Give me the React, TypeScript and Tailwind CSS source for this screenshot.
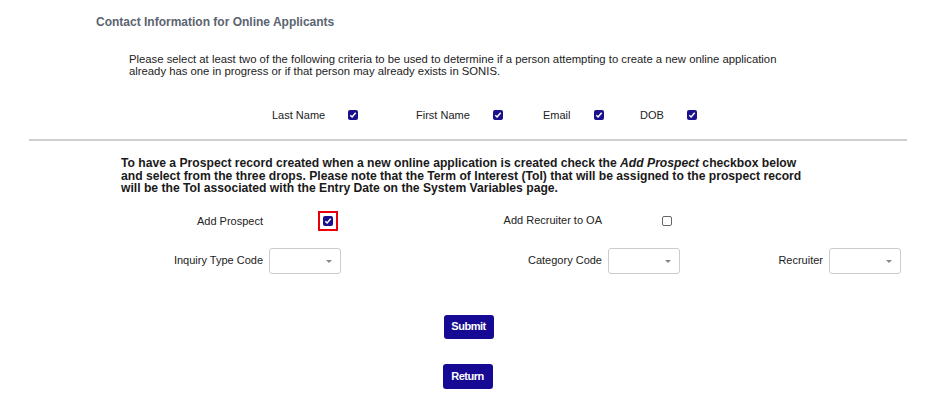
import React from "react";

const font = { fontFamily: '"Liberation Sans", Arial, sans-serif' };

function Check({ checked = true }: { checked?: boolean }) {
  if (!checked)
    return <span className="inline-block w-[10px] h-[10px] border border-[#666] rounded-[2px] bg-white" />;
  return (
    <span className="inline-flex items-center justify-center w-[10px] h-[10px] bg-[#1a0f8c] rounded-[2px]">
      <svg width="8" height="8" viewBox="0 0 8 8">
        <path d="M1.3 4.2 L3.1 6 L6.7 1.8" stroke="white" strokeWidth="1.5" fill="none" />
      </svg>
    </span>
  );
}

function Select() {
  return (
    <div className="relative w-[72px] h-[26px] border border-[#ccc] rounded-[3px] bg-white">
      <span className="absolute right-[8px] top-[11px] w-0 h-0 border-l-[3px] border-r-[3px] border-t-[3px] border-l-transparent border-r-transparent border-t-[#888]" />
    </div>
  );
}

export default function App() {
  return (
    <div className="w-[936px] h-[402px] bg-white text-[#222] text-[11px]" style={font}>
      <div className="pt-[16px] pl-[96px] text-[12px] font-bold text-[#5b6470] leading-[13px]">
        Contact Information for Online Applicants
      </div>
      <div className="mt-[24px] ml-[129px] leading-[12px] w-[665px] text-[11.3px]">
        Please select at least two of the following criteria to be used to determine if a person attempting to create a new online application already has one in progress or if that person may already exists in SONIS.
      </div>
      <div className="mt-[31px] flex items-center h-[14px] pl-[272px]">
        <span className="w-[76px]">Last Name</span>
        <Check />
        <span className="ml-[58px] w-[77px]">First Name</span>
        <Check />
        <span className="ml-[40px] w-[51px]">Email</span>
        <Check />
        <span className="ml-[36px] w-[47px]">DOB</span>
        <Check />
      </div>
      <div className="mt-[17px] mx-[29px] h-[2px] bg-[#d0d0d0]" />
      <div className="mt-[16px] ml-[121px] w-[695px] font-bold leading-[12.5px] text-[12.15px] text-[#1a1a1a]">
        To have a Prospect record created when a new online application is created check the <i>Add Prospect</i> checkbox below and select from the three drops. Please note that the Term of Interest (ToI) that will be assigned to the prospect record will be the ToI associated with the Entry Date on the System Variables page.
      </div>
      <div className="mt-[16px] grid grid-cols-[263px_177px_162px_118px_103px_113px] items-center">
        <div className="text-right h-[20px] leading-[20px]">Add Prospect</div>
        <div className="pl-[55px] flex">
          <span className="inline-flex items-center justify-center w-[20px] h-[20px] border-2 border-[#e8000b]">
            <Check />
          </span>
        </div>
        <div className="text-right">Add Recruiter to OA</div>
        <div className="pl-[60px] flex">
          <Check checked={false} />
        </div>
        <div />
        <div />
        <div className="text-right mt-[17px]">Inquiry Type Code</div>
        <div className="pl-[6px] mt-[17px]">
          <Select />
        </div>
        <div className="text-right mt-[17px]">Category Code</div>
        <div className="pl-[6px] mt-[17px]">
          <Select />
        </div>
        <div className="text-right mt-[17px]">Recruiter</div>
        <div className="pl-[6px] mt-[17px]">
          <Select />
        </div>
      </div>
      <div className="mt-[41px] flex flex-col items-center">
        <button className="ml-[1px] w-[50px] h-[24px] bg-[#160a94] text-white font-bold text-[11px] tracking-[-0.5px] rounded-[3px]">
          Submit
        </button>
        <button className="mt-[25px] ml-[-1px] w-[50px] h-[25px] bg-[#160a94] text-white font-bold text-[11px] tracking-[-0.5px] rounded-[3px]">
          Return
        </button>
      </div>
    </div>
  );
}
